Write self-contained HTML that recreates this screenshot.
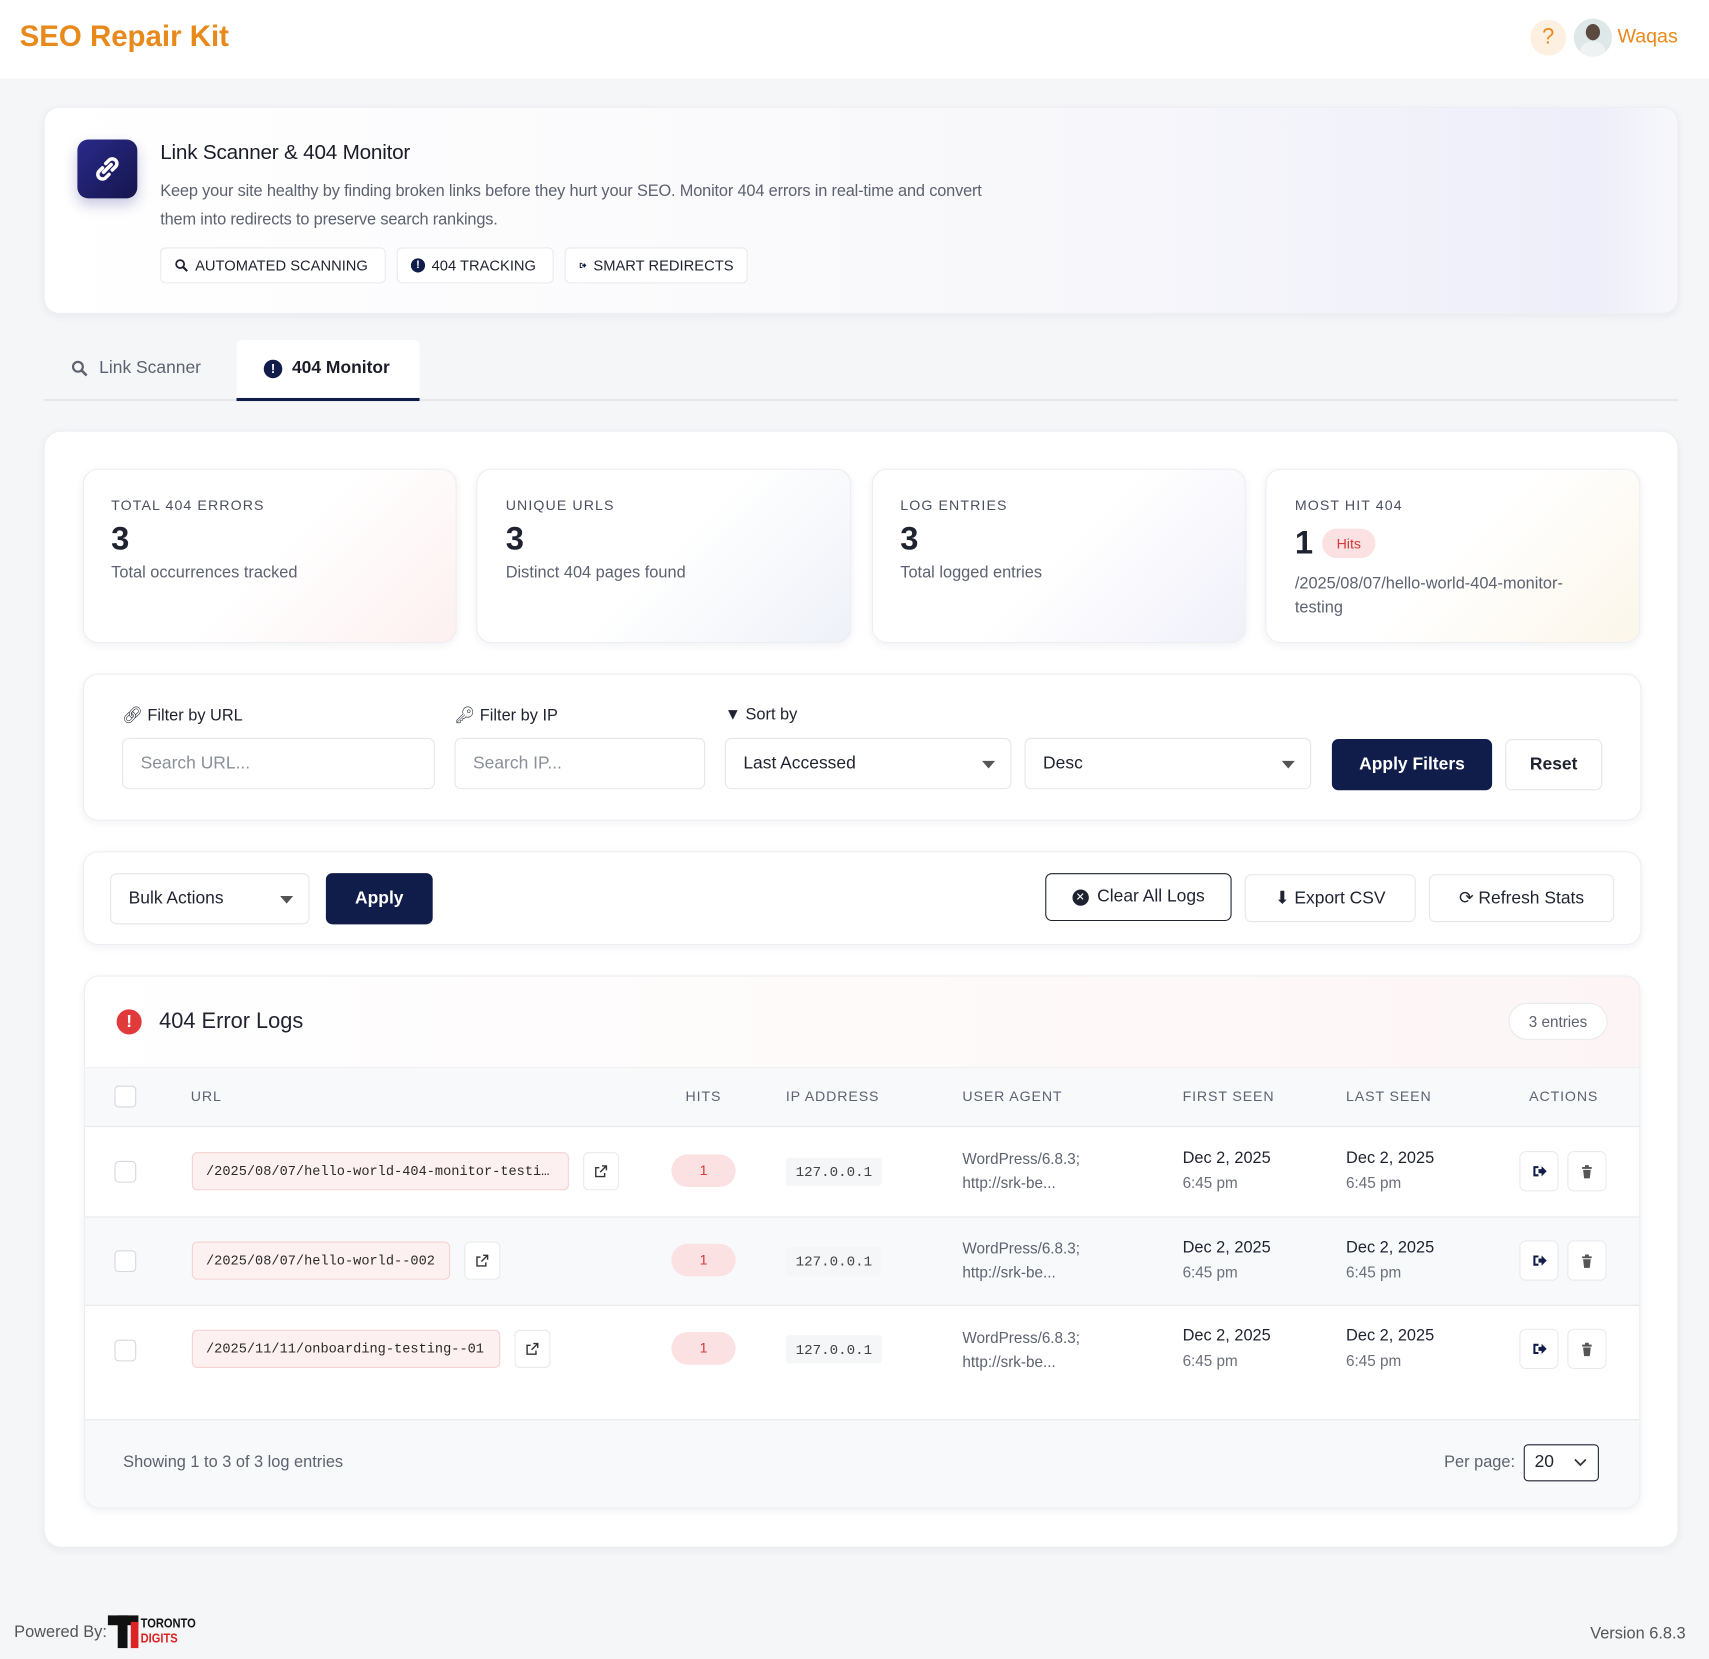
<!DOCTYPE html>
<html><head><meta charset="utf-8"><style>
*{box-sizing:border-box;margin:0;padding:0}
html,body{width:1709px;height:1659px;overflow:hidden;background:#f5f6f8}
#w{position:absolute;left:0;top:0;width:1568px;height:1522px;transform:scale(1.08992,1.09001);transform-origin:0 0;font-family:"Liberation Sans",sans-serif;color:#1f2330}
.a{position:absolute}
.card{position:absolute;background:#fff;border:1px solid #eceef2;border-radius:14px;box-shadow:0 2px 8px rgba(20,30,60,.06)}
.lbl{font-size:13px;letter-spacing:1px;color:#4b5060;text-transform:uppercase}
.num{font-size:30px;font-weight:bold;color:#1f2330}
.sub{font-size:15px;color:#5d6270}
.inp{position:absolute;height:47px;border:1px solid #e4e6ea;border-radius:6px;background:#fff;font-size:16px;color:#8a8f99;padding:14px 16px}
.btn{position:absolute;border:1px solid #e4e6ea;border-radius:6px;background:#fff;font-size:16px;color:#1f2330;display:flex;align-items:center;justify-content:center;gap:8px}
.navy{background:#101c4a;color:#fff;border-color:#101c4a;font-weight:bold}
.chip{position:absolute;top:227px;height:33px;border:1px solid #e8eaee;border-radius:5px;background:#fff;font-size:13.5px;display:flex;align-items:center;gap:6px;padding:0 12px;white-space:nowrap;overflow:hidden}
.th{position:absolute;top:998px;font-size:13px;letter-spacing:.8px;color:#5d6270}
.cb{position:absolute;left:105px;width:20px;height:20px;border:1px solid #d5d8de;border-radius:4px;background:#fff}
.url{position:absolute;height:35px;background:#fdf0f0;border:1px solid #f3d3d3;border-radius:5px;font-family:"Liberation Mono",monospace;font-size:12.5px;color:#2a2a2a;padding:10px 12px;white-space:nowrap;overflow:hidden}
.ext{position:absolute;width:33px;height:35px;border:1px solid #e8eaee;border-radius:5px;background:#fff;display:flex;align-items:center;justify-content:center}
.hit{position:absolute;left:616px;width:59px;height:30px;border-radius:15px;background:#fbe1e1;color:#d23b3b;font-size:13px;text-align:center;line-height:30px}
.ip{position:absolute;left:721px;height:26px;padding:6px 9px;background:#f5f6f8;font-family:"Liberation Mono",monospace;font-size:13px;color:#444;border-radius:3px}
.ua{position:absolute;left:883px;font-size:14px;color:#5d6270;line-height:22px}
.dt{position:absolute;font-size:15px;line-height:23px;color:#1f2330}
.dt span{font-size:14px;color:#6a6f7a}
.act{position:absolute;width:36px;height:37px;border:1px solid #e8eaee;border-radius:6px;background:#fff;display:flex;align-items:center;justify-content:center}
</style></head><body><div id="w">
<svg width="0" height="0" style="position:absolute"><defs>
<symbol id="ex" viewBox="0 0 16 16"><g fill="none" stroke="#333" stroke-width="1.6"><path d="M9 2h5v5M14 2L7 9"/><path d="M12 10v4H2V4h4"/></g></symbol>
<symbol id="rd" viewBox="0 0 16 16"><path d="M2 3h5v2H4v6h3v2H2z M7 6h3V3l5 5-5 5v-3H7z" fill="#101c4a"/></symbol>
<symbol id="tr" viewBox="0 0 16 16"><path d="M3 3h10v2H3zM6 1h4v2H6zM4 6h8l-1 9H5z" fill="#555"/></symbol>
<symbol id="mg" viewBox="0 0 16 16"><circle cx="6.5" cy="6.5" r="4.5" fill="none" stroke="currentColor" stroke-width="2"/><path d="M10 10l4.5 4.5" stroke="currentColor" stroke-width="2.4"/></symbol>
</defs></svg>
<div class="a" style="left:0;top:0;width:1568px;height:72px;background:#fff"></div>
<div class="a" style="left:18px;top:18px;font-size:27px;font-weight:bold;color:#e8891c">SEO Repair Kit</div>
<div class="a" style="left:1404px;top:18px;width:33px;height:33px;border-radius:50%;background:#fdf0e0;color:#e8891c;font-size:20px;text-align:center;line-height:33px">?</div>
<div class="a" style="left:1444px;top:17px;width:35px;height:35px;border-radius:50%;background:#dfe8e8;overflow:hidden"><div class="a" style="left:11px;top:5px;width:13px;height:15px;border-radius:50%;background:#5a4a40"></div><div class="a" style="left:6px;top:21px;width:23px;height:16px;border-radius:10px 10px 0 0;background:#eef2f2"></div></div>
<div class="a" style="left:1484px;top:23px;font-size:18px;color:#e8891c">Waqas</div>

<div class="card" style="left:40px;top:98px;width:1500px;height:190px;background:linear-gradient(90deg,#fff 0%,#f8f8fb 60%,#eeeefa 95%,#f7f7fb 100%)"></div>
<div class="a" style="left:71px;top:128px;width:55px;height:54px;border-radius:10px;background:linear-gradient(135deg,#2a2a8a,#15154d);box-shadow:0 6px 12px rgba(40,40,140,.25)"><svg width="55" height="54" viewBox="0 0 55 54"><g fill="none" stroke="#fff" stroke-width="3.2" stroke-linecap="round"><path d="M26 22l3-3a4 4 0 0 1 6 6l-3 3"/><path d="M29 32l-3 3a4 4 0 0 1-6-6l3-3"/><path d="M24 30l7-7"/></g></svg></div>
<div class="a" style="left:147px;top:130px;font-size:19px;color:#1a1d28;letter-spacing:-.2px">Link Scanner &amp; 404 Monitor</div>
<div class="a" style="left:147px;top:163px;font-size:15px;line-height:26px;color:#5d6270;width:790px;letter-spacing:-.15px">Keep your site healthy by finding broken links before they hurt your SEO. Monitor 404 errors in real-time and convert them into redirects to preserve search rankings.</div>
<div class="chip" style="left:147px;width:207px"><svg width="13" height="13" style="color:#1f2330"><use href="#mg"/></svg>AUTOMATED SCANNING</div>
<div class="chip" style="left:364px;width:144px"><span style="display:inline-block;width:13px;height:13px;border-radius:50%;background:#101c4a;color:#fff;font-size:10px;text-align:center;line-height:13px;font-weight:bold">!</span>404 TRACKING</div>
<div class="chip" style="left:518px;width:168px"><svg width="13" height="13"><use href="#rd"/></svg>SMART REDIRECTS</div>

<div class="a" style="left:40px;top:366px;width:1500px;height:2px;background:#e6e8ec"></div>
<div class="a" style="left:65px;top:329px;font-size:16px;color:#5d6270;display:flex;gap:10px;align-items:center"><svg width="16" height="16" style="color:#5d6270"><use href="#mg"/></svg>Link Scanner</div>
<div class="a" style="left:217px;top:312px;width:168px;height:56px;background:#fff;border-bottom:3px solid #101c4a;border-radius:6px 6px 0 0"></div>
<div class="a" style="left:242px;top:329px;font-size:16px;color:#1a1d28;font-weight:bold"><span style="display:inline-block;width:17px;height:17px;border-radius:50%;background:#101c4a;color:#fff;font-size:12px;text-align:center;line-height:17px">!</span>&nbsp; 404 Monitor</div>

<div class="card" style="left:40px;top:395px;width:1500px;height:1025px;border-radius:16px"></div>
<div class="card" style="left:76px;top:430px;width:343px;height:160px;background:linear-gradient(135deg,#fff 50%,#fdf0f0)"></div>
<div class="card" style="left:437px;top:430px;width:344px;height:160px;background:linear-gradient(135deg,#fff 50%,#eef1f8)"></div>
<div class="card" style="left:800px;top:430px;width:343px;height:160px;background:linear-gradient(135deg,#fff 50%,#f0f0fa)"></div>
<div class="card" style="left:1161px;top:430px;width:344px;height:160px;background:linear-gradient(135deg,#fff 50%,#fcf6ea)"></div>
<div class="a lbl" style="left:102px;top:456px">Total 404 Errors</div><div class="a num" style="left:102px;top:478px">3</div><div class="a sub" style="left:102px;top:517px">Total occurrences tracked</div>
<div class="a lbl" style="left:464px;top:456px">Unique URLs</div><div class="a num" style="left:464px;top:478px">3</div><div class="a sub" style="left:464px;top:517px">Distinct 404 pages found</div>
<div class="a lbl" style="left:826px;top:456px">Log Entries</div><div class="a num" style="left:826px;top:478px">3</div><div class="a sub" style="left:826px;top:517px">Total logged entries</div>
<div class="a lbl" style="left:1188px;top:456px">Most Hit 404</div><div class="a num" style="left:1188px;top:482px">1</div>
<div class="a" style="left:1213px;top:485px;width:49px;height:27px;border-radius:14px;background:#fbe1e1;color:#d23b3b;font-size:13px;text-align:center;line-height:27px">Hits</div>
<div class="a sub" style="left:1188px;top:525px;line-height:22px;width:275px">/2025/08/07/hello-world-404-monitor-testing</div>

<div class="card" style="left:76px;top:618px;width:1430px;height:135px"></div>
<div class="a" style="left:112px;top:647px;font-size:15px">&#128279;&#xFE0E; Filter by URL</div>
<div class="a" style="left:417px;top:647px;font-size:15px">&#128273;&#xFE0E; Filter by IP</div>
<div class="a" style="left:665px;top:647px;font-size:15px">&#9660; Sort by</div>
<div class="inp" style="left:112px;top:677px;width:287px">Search URL...</div>
<div class="inp" style="left:417px;top:677px;width:230px">Search IP...</div>
<div class="inp" style="left:665px;top:677px;width:263px;color:#1f2330">Last Accessed<span style="position:absolute;right:14px;top:20px;border:6px solid transparent;border-top:7px solid #555"></span></div>
<div class="inp" style="left:940px;top:677px;width:263px;color:#1f2330">Desc<span style="position:absolute;right:14px;top:20px;border:6px solid transparent;border-top:7px solid #555"></span></div>
<div class="btn navy" style="left:1222px;top:678px;width:147px;height:47px">Apply Filters</div>
<div class="btn" style="left:1381px;top:678px;width:89px;height:47px;font-weight:bold">Reset</div>

<div class="card" style="left:76px;top:781px;width:1430px;height:86px"></div>
<div class="inp" style="left:101px;top:801px;width:183px;color:#1f2330">Bulk Actions<span style="position:absolute;right:14px;top:20px;border:6px solid transparent;border-top:7px solid #555"></span></div>
<div class="btn navy" style="left:299px;top:801px;width:98px;height:47px">Apply</div>
<div class="btn" style="left:959px;top:801px;width:171px;height:44px;border-color:#1f2330"><span style="display:inline-block;width:15px;height:15px;border-radius:50%;background:#1f2330;color:#fff;font-size:10px;line-height:15px;text-align:center">&#10005;</span>Clear All Logs</div>
<div class="btn" style="left:1142px;top:802px;width:157px;height:44px">&#11015;&#xFE0E; Export CSV</div>
<div class="btn" style="left:1311px;top:802px;width:170px;height:44px">&#10227; Refresh Stats</div>

<div class="card" style="left:77px;top:895px;width:1428px;height:489px;overflow:hidden">
<div class="a" style="left:0;top:0;width:1428px;height:84px;background:linear-gradient(90deg,#fff,#fdf5f5);border-bottom:1px solid #eee"></div>
<div class="a" style="left:0;top:84px;width:1428px;height:54px;background:#f8f9fb;border-bottom:1px solid #e6e8ec"></div>
<div class="a" style="left:0;top:220px;width:1428px;height:82px;background:#f8f9fb;border-top:1px solid #e6e8ec;border-bottom:1px solid #e6e8ec"></div>
<div class="a" style="left:0;top:406px;width:1428px;height:83px;background:#f8f9fb;border-top:1px solid #e6e8ec"></div>
</div>
<div class="a" style="left:107px;top:926px;width:23px;height:23px;border-radius:50%;background:#e03a3a;color:#fff;font-weight:bold;text-align:center;line-height:23px;font-size:16px">!</div>
<div class="a" style="left:146px;top:926px;font-size:20px">404 Error Logs</div>
<div class="a" style="left:1384px;top:920px;width:91px;height:34px;border:1px solid #e8eaee;border-radius:17px;background:#fff;font-size:14px;color:#5d6270;text-align:center;line-height:32px">3 entries</div>
<div class="cb" style="top:996px"></div>
<div class="th" style="left:175px">URL</div><div class="th" style="left:629px">HITS</div><div class="th" style="left:721px">IP ADDRESS</div><div class="th" style="left:883px">USER AGENT</div><div class="th" style="left:1085px">FIRST SEEN</div><div class="th" style="left:1235px">LAST SEEN</div><div class="th" style="left:1403px">ACTIONS</div>

<div class="cb" style="top:1065px"></div>
<div class="url" style="left:176px;top:1057px;width:346px">/2025/08/07/hello-world-404-monitor-testi…</div>
<div class="ext" style="left:535px;top:1057px"><svg width="13" height="13"><use href="#ex"/></svg></div>
<div class="hit" style="top:1059px">1</div><div class="ip" style="top:1062px">127.0.0.1</div>
<div class="ua" style="top:1052px">WordPress/6.8.3;<br>http://srk-be...</div>
<div class="dt" style="left:1085px;top:1051px">Dec 2, 2025<br><span>6:45 pm</span></div><div class="dt" style="left:1235px;top:1051px">Dec 2, 2025<br><span>6:45 pm</span></div>
<div class="act" style="left:1394px;top:1056px"><svg width="15" height="15"><use href="#rd"/></svg></div><div class="act" style="left:1438px;top:1056px"><svg width="14" height="14"><use href="#tr"/></svg></div>

<div class="cb" style="top:1147px"></div>
<div class="url" style="left:176px;top:1139px;width:237px">/2025/08/07/hello-world--002</div>
<div class="ext" style="left:426px;top:1139px"><svg width="13" height="13"><use href="#ex"/></svg></div>
<div class="hit" style="top:1141px">1</div><div class="ip" style="top:1144px">127.0.0.1</div>
<div class="ua" style="top:1134px">WordPress/6.8.3;<br>http://srk-be...</div>
<div class="dt" style="left:1085px;top:1133px">Dec 2, 2025<br><span>6:45 pm</span></div><div class="dt" style="left:1235px;top:1133px">Dec 2, 2025<br><span>6:45 pm</span></div>
<div class="act" style="left:1394px;top:1138px"><svg width="15" height="15"><use href="#rd"/></svg></div><div class="act" style="left:1438px;top:1138px"><svg width="14" height="14"><use href="#tr"/></svg></div>

<div class="cb" style="top:1229px"></div>
<div class="url" style="left:176px;top:1220px;width:283px">/2025/11/11/onboarding-testing--01</div>
<div class="ext" style="left:472px;top:1220px"><svg width="13" height="13"><use href="#ex"/></svg></div>
<div class="hit" style="top:1222px">1</div><div class="ip" style="top:1225px">127.0.0.1</div>
<div class="ua" style="top:1216px">WordPress/6.8.3;<br>http://srk-be...</div>
<div class="dt" style="left:1085px;top:1214px">Dec 2, 2025<br><span>6:45 pm</span></div><div class="dt" style="left:1235px;top:1214px">Dec 2, 2025<br><span>6:45 pm</span></div>
<div class="act" style="left:1394px;top:1219px"><svg width="15" height="15"><use href="#rd"/></svg></div><div class="act" style="left:1438px;top:1219px"><svg width="14" height="14"><use href="#tr"/></svg></div>

<div class="a" style="left:113px;top:1333px;font-size:15px;color:#5d6270">Showing 1 to 3 of 3 log entries</div>
<div class="a" style="left:1325px;top:1333px;font-size:15px;color:#5d6270">Per page:</div>
<div class="a" style="left:1398px;top:1325px;width:69px;height:34px;border:1px solid #1f2330;border-radius:4px;background:#fff;font-size:16px;padding:7px 9px">20<svg class="a" style="right:10px;top:12px" width="12" height="8"><path d="M1 1l5 5 5-5" fill="none" stroke="#333" stroke-width="1.6"/></svg></div>

<div class="a" style="left:13px;top:1489px;font-size:15px;color:#555">Powered By:</div>
<div class="a" style="left:99px;top:1482px;width:28px;height:9px;background:#111"></div>
<div class="a" style="left:108px;top:1482px;width:9px;height:30px;background:#111"></div>
<div class="a" style="left:120px;top:1488px;width:7px;height:24px;background:#d22"></div>
<div class="a" style="left:129px;top:1482px;font-size:12px;font-weight:bold;color:#111;line-height:14px;transform:scaleX(.85);transform-origin:0 0">TORONTO<br><span style="color:#d22">DIGITS</span></div>
<div class="a" style="left:1459px;top:1490px;font-size:15px;color:#555">Version 6.8.3</div>
</div></body></html>
